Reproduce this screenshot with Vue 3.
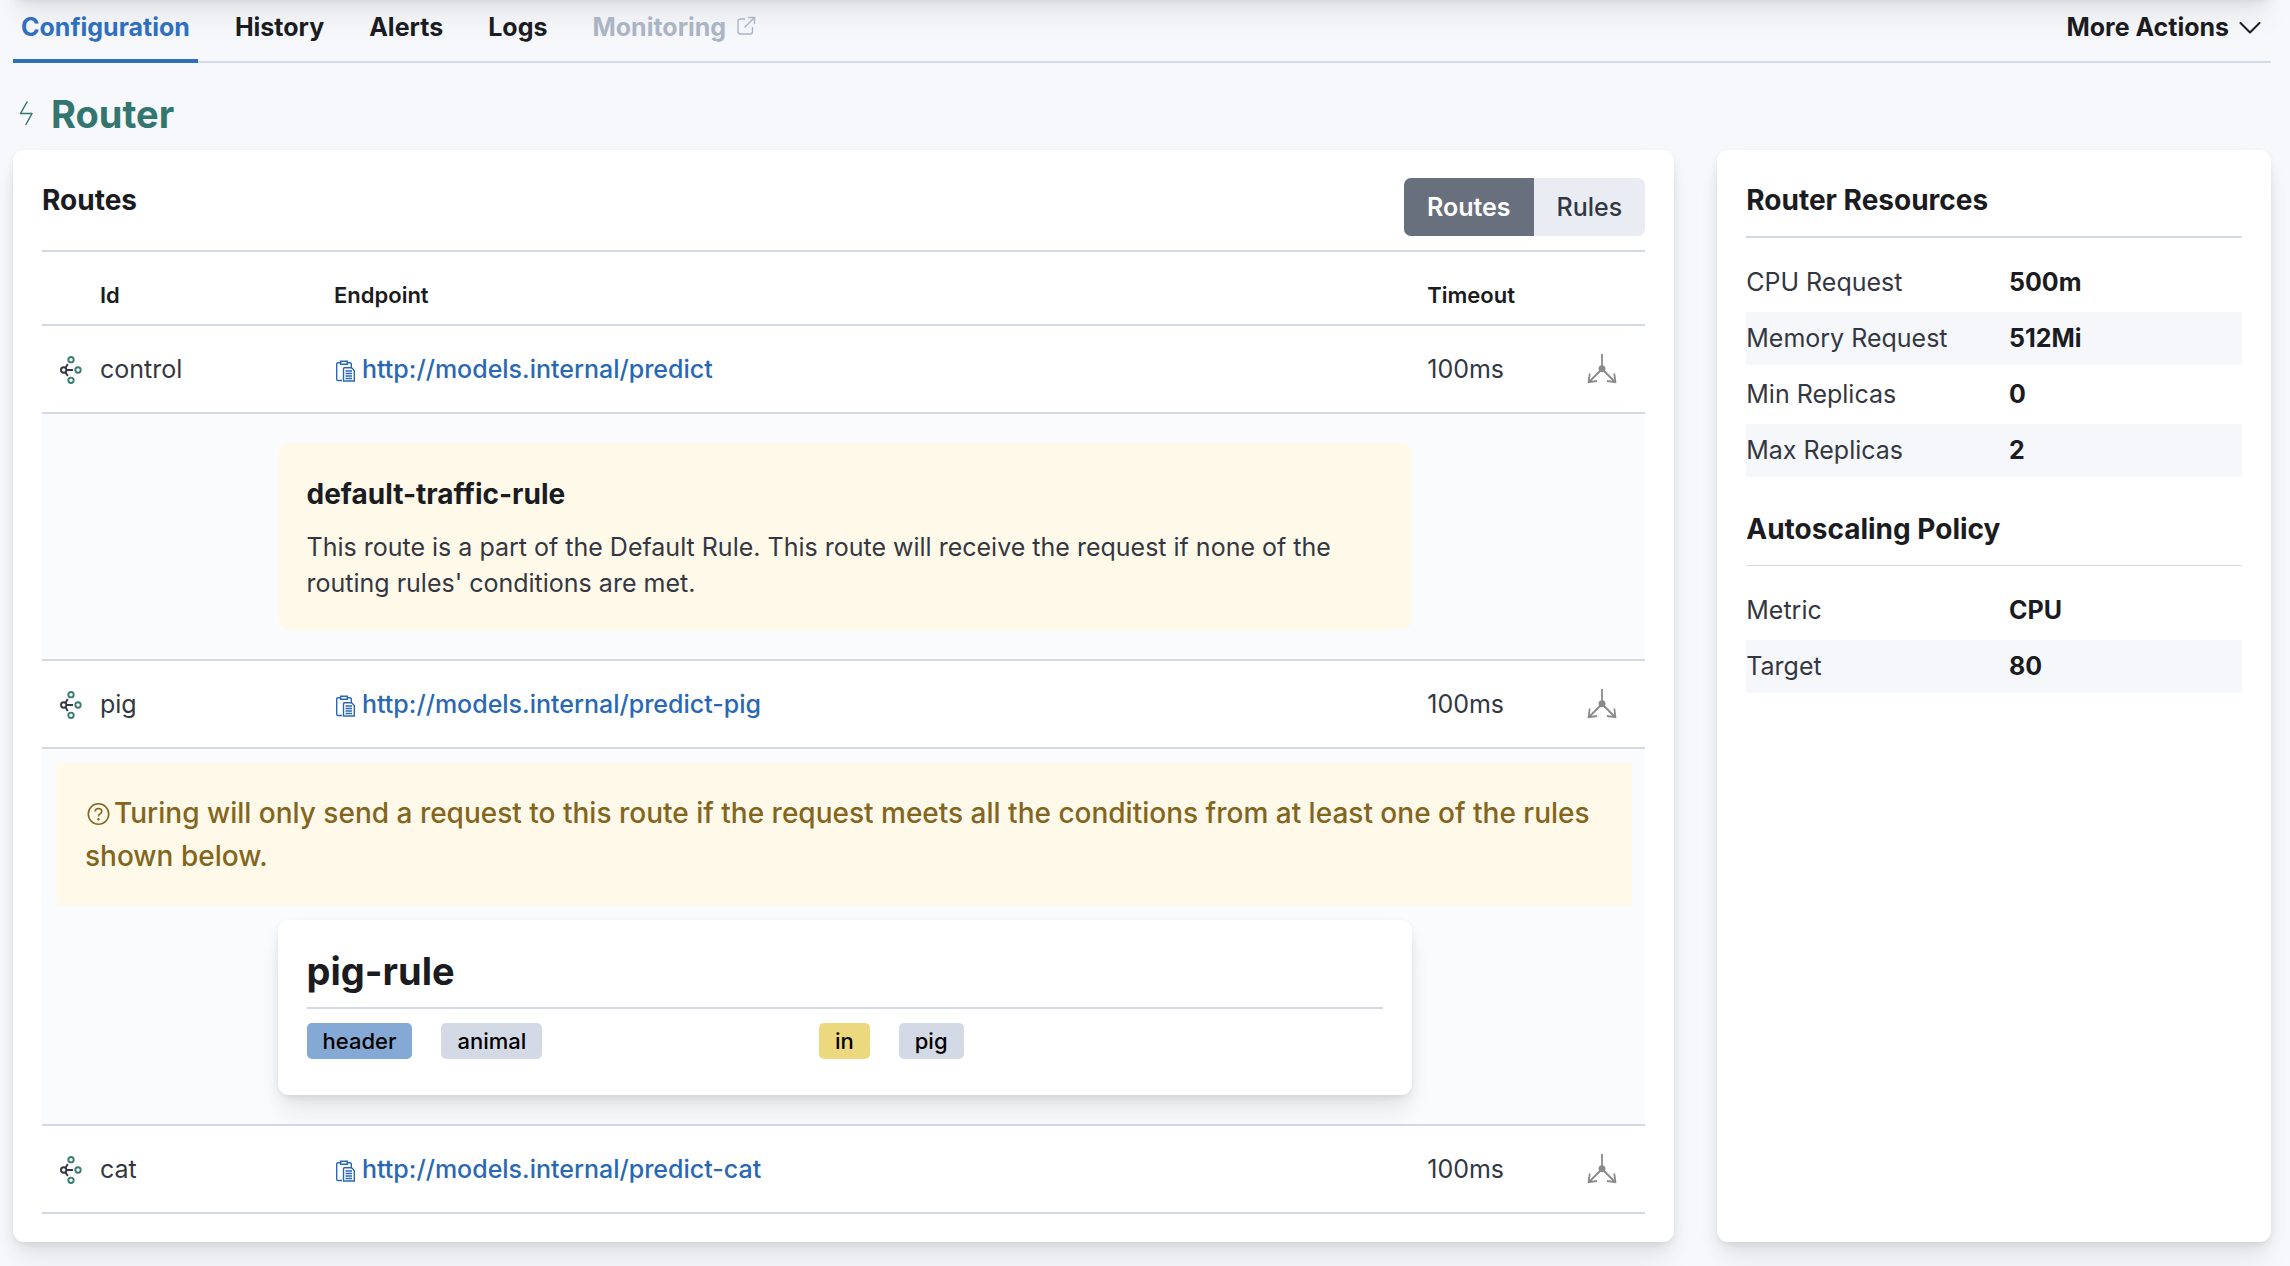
<script setup>
import { ref } from 'vue'

const tabs = ['Configuration', 'History', 'Alerts', 'Logs']
const activeTab = ref('Configuration')
const views = ['Routes', 'Rules']
const activeView = ref('Routes')

const routes = [
  { id: 'control', endpoint: 'http://models.internal/predict', timeout: '100ms', isDefault: true },
  {
    id: 'pig',
    endpoint: 'http://models.internal/predict-pig',
    timeout: '100ms',
    rule: { name: 'pig-rule', source: 'header', field: 'animal', operator: 'in', value: 'pig' },
  },
  { id: 'cat', endpoint: 'http://models.internal/predict-cat', timeout: '100ms' },
]

const sections = [
  {
    title: 'Router Resources',
    items: [
      ['CPU Request', '500m'],
      ['Memory Request', '512Mi'],
      ['Min Replicas', '0'],
      ['Max Replicas', '2'],
    ],
  },
  {
    title: 'Autoscaling Policy',
    items: [
      ['Metric', 'CPU'],
      ['Target', '80'],
    ],
  },
]
</script>

<template>
  <div class="page">
    <nav class="tabs">
      <button
        v-for="tab in tabs"
        :key="tab"
        type="button"
        class="tab"
        :class="{ active: tab === activeTab }"
        @click="activeTab = tab"
      >{{ tab }}</button>
      <button type="button" class="tab muted" disabled>
        Monitoring
        <svg width="20" height="20" viewBox="0 0 20 20" fill="none" stroke="currentColor" stroke-width="1.4" aria-hidden="true">
          <path d="M9 3H4.500Q2 3 2 5.500V15.500Q2 18 4.500 18H14Q16.500 18 16.500 15.500V11M12 1.500H18.500V8M18.300 1.700L8.500 11.500" />
        </svg>
      </button>
      <button type="button" class="tab more">
        More Actions
        <svg width="22" height="14" viewBox="0 0 22 14" fill="none" stroke="currentColor" stroke-width="2" stroke-linecap="round" stroke-linejoin="round" aria-hidden="true">
          <path d="M1.500 1L11 10.500L20.500 1" />
        </svg>
      </button>
    </nav>

    <h1 class="page-title">
      <svg width="16" height="26" viewBox="0 0 16 26" fill="none" stroke="currentColor" stroke-width="1.500" stroke-linejoin="round" stroke-linecap="round" aria-hidden="true">
        <path d="M9 1L2.500 12.500H14L8 23.500" />
      </svg>
      Router
    </h1>

    <main class="columns">
      <section class="panel routes">
        <header class="panel-head">
          <h2 class="title">Routes</h2>
          <div class="toggle" role="group" aria-label="View">
            <button
              v-for="view in views"
              :key="view"
              type="button"
              :aria-pressed="view === activeView"
              @click="activeView = view"
            >{{ view }}</button>
          </div>
        </header>

        <table class="table">
          <colgroup>
            <col class="c-icon" />
            <col class="c-id" />
            <col />
            <col class="c-timeout" />
            <col class="c-action" />
          </colgroup>
          <thead>
            <tr>
              <th></th>
              <th scope="col">Id</th>
              <th scope="col">Endpoint</th>
              <th scope="col">Timeout</th>
              <th></th>
            </tr>
          </thead>
          <tbody>
            <template v-for="route in routes" :key="route.id">
              <tr class="row">
                <td class="route-icon">
                  <svg width="24" height="28" viewBox="0 0 24 28" fill="none" stroke-width="1.900" aria-hidden="true">
                    <g stroke="#343741">
                      <circle cx="4.700" cy="14" r="2.700" />
                      <path d="M6.500 11.800L8.800 8M7.500 14H14M6.500 16.200L8.800 20" />
                    </g>
                    <g stroke="#387c72">
                      <circle cx="12" cy="3.700" r="2.700" />
                      <circle cx="19" cy="14" r="2.700" />
                      <circle cx="12" cy="24.300" r="2.700" />
                    </g>
                  </svg>
                </td>
                <td>{{ route.id }}</td>
                <td>
                  <a class="endpoint" :href="route.endpoint">
                    <svg width="22" height="22" viewBox="0 0 22 22" fill="none" stroke="currentColor" stroke-width="1.400" aria-hidden="true">
                      <path d="M8 20.500H4Q2.700 20.500 2.700 19.200V4Q2.700 2.700 4 2.700H6.500M13.500 2.700H16Q17.300 2.700 17.300 4V7.500" />
                      <path d="M6.700 1.200H13.300V4.200H6.700Z" />
                      <path d="M10.300 7.700H17.500L20.300 10.500V21H9.500V8.500Q9.500 7.700 10.300 7.700Z" />
                      <path d="M11.500 11H18M11.500 13.500H18M11.500 16H18M11.500 18.500H18" />
                    </svg>
                    <span>{{ route.endpoint }}</span>
                  </a>
                </td>
                <td>{{ route.timeout }}</td>
                <td class="action">
                  <button type="button" aria-label="Toggle route details">
                    <svg width="30" height="30" viewBox="0 0 30 30" fill="none" stroke="#8a8a8a" stroke-width="1.800" aria-hidden="true">
                      <path d="M15 0V15M15 15L2 28M15 15L28 28M2.700 19.500L1.600 28.200L10 27M27.300 19.500L28.400 28.200L20 27" />
                      <circle cx="15" cy="14.700" r="3.500" fill="#8a8a8a" stroke="none" />
                    </svg>
                  </button>
                </td>
              </tr>
              <tr v-if="route.isDefault" class="details">
                <td colspan="5" class="spacious">
                  <article class="card default-rule">
                    <h3 class="title">default-traffic-rule</h3>
                    <p>This route is a part of the Default Rule. This route will receive the request if none of the routing rules' conditions are met.</p>
                  </article>
                </td>
              </tr>
              <tr v-if="route.rule" class="details">
                <td colspan="5">
                  <p class="callout">
                    <svg width="29" height="24" viewBox="0 0 29 24" fill="none" stroke="currentColor" stroke-width="1.600" aria-hidden="true">
                      <circle cx="13.500" cy="12" r="10.200" />
                      <path d="M10.200 9.500Q10.200 6.500 13.500 6.500Q16.800 6.500 16.800 9.300Q16.800 11 15 11.900Q13.500 12.700 13.500 14.500" />
                      <circle cx="13.500" cy="17.300" r="1.200" fill="currentColor" stroke="none" />
                    </svg>Turing will only send a request to this route if the request meets all the conditions from at least one of the rules shown below.
                  </p>
                  <article class="card rule">
                    <h3>{{ route.rule.name }}</h3>
                    <div class="conditions">
                      <div class="badges">
                        <span class="badge source">{{ route.rule.source }}</span>
                        <span class="badge">{{ route.rule.field }}</span>
                      </div>
                      <div class="badges">
                        <span class="badge operator">{{ route.rule.operator }}</span>
                        <span class="badge">{{ route.rule.value }}</span>
                      </div>
                    </div>
                  </article>
                </td>
              </tr>
            </template>
          </tbody>
        </table>
      </section>

      <aside class="panel resources">
        <section v-for="section in sections" :key="section.title">
          <h2 class="title">{{ section.title }}</h2>
          <dl>
            <div v-for="[label, value] in section.items" :key="label">
              <dt>{{ label }}</dt>
              <dd>{{ value }}</dd>
            </div>
          </dl>
        </section>
      </aside>
    </main>
  </div>
</template>

<style>
body {
  margin: 0;
  background: #f7f8fc;
}
</style>

<style scoped>
.page {
  --border: #d3dae6;
  --ink: #1a1c21;
  --warm: #fff9ea;
  --shadow: 0 2px 7px -2px rgba(0, 0, 0, 0.08), 0 5px 14px -2px rgba(0, 0, 0, 0.06),
    0 10px 22px -2px rgba(0, 0, 0, 0.05), 0 27px 27px -2px rgba(0, 0, 0, 0.04);
  position: relative;
  min-height: 100vh;
  box-sizing: border-box;
  padding: 0 19px 23px 13px;
  overflow: hidden;
  background: #f7f8fc;
  color: #343741;
  font: 400 25px/36px Inter, "Liberation Sans", sans-serif;
}

.page::before {
  content: "";
  position: absolute;
  top: -42px;
  left: 13px;
  right: 19px;
  height: 40px;
  box-shadow: var(--shadow);
}

h1, h2, h3, p, dl, dd {
  margin: 0;
}

button {
  border: 0;
  padding: 0;
  background: none;
  color: inherit;
  font: inherit;
  cursor: pointer;
}

.tabs {
  position: relative;
  display: flex;
  gap: 29px;
  border-bottom: 2px solid var(--border);
}

.tab {
  margin-bottom: -2px;
  padding: 9px 8px 14px;
  border-bottom: 4px solid transparent;
  color: var(--ink);
  font-weight: 700;
}

.tab.active {
  border-color: #2f6fbf;
  color: #2f6fbf;
}

.tab.muted {
  color: #abb4c4;
}

.tab svg {
  margin-left: 4px;
}

.tab.more {
  margin-left: auto;
  padding-right: 10px;
}

.page-title {
  display: flex;
  align-items: center;
  gap: 17px;
  margin: 27px 0 12px;
  padding-left: 5px;
  color: #33766f;
  font-size: 38px;
  font-weight: 700;
  line-height: 48px;
}

.columns {
  display: grid;
  grid-template-columns: 3fr 1fr;
  gap: 43px;
}

.panel {
  min-width: 0;
  padding: 28px 29px;
  border-radius: 11px;
  background: #fff;
  box-shadow: var(--shadow);
}

.title {
  color: var(--ink);
  font-size: 28px;
  font-weight: 700;
  line-height: 44px;
}

.panel-head {
  display: flex;
  align-items: flex-start;
  justify-content: space-between;
  padding-bottom: 14px;
  border-bottom: 2px solid var(--border);
}

.toggle {
  display: flex;
  overflow: hidden;
  border-radius: 7px;
  background: #e9edf3;
}

.toggle button {
  padding: 0 23px;
  font-weight: 500;
  line-height: 58px;
}

.toggle button[aria-pressed="true"] {
  background: #69707d;
  color: #fff;
  font-weight: 600;
}

.table {
  width: 100%;
  table-layout: fixed;
  border-collapse: separate;
  border-spacing: 0;
}

.c-icon { width: 46px; }
.c-id { width: 234px; }
.c-timeout { width: 144px; }
.c-action { width: 86px; }

.table th {
  height: 58px;
  padding: 14px 12px 0;
  border-bottom: 2px solid var(--border);
  color: var(--ink);
  font-size: 22px;
  font-weight: 600;
  text-align: left;
}

.table td {
  padding: 0 12px;
  border-bottom: 2px solid var(--border);
}

.row td {
  box-sizing: border-box;
  height: 88px;
}

.table .route-icon {
  padding: 2px 0 0 17px;
}

.table .action {
  padding: 0;
}

.table svg {
  display: block;
}

.action button {
  display: block;
  margin: 0 auto;
}

.endpoint {
  display: flex;
  align-items: center;
  gap: 6px;
  color: #2968b4;
  font-weight: 500;
  text-decoration: none;
}

.endpoint svg {
  margin-top: 4px;
}

.details td {
  padding: 14px 13px 29px 15px;
  background: #fafbfd;
}

.details .spacious {
  padding-top: 29px;
}

.card {
  width: 72%;
  box-sizing: border-box;
  margin: 0 auto;
  padding: 29px;
  border-radius: 11px;
}

.default-rule {
  background: var(--warm);
}

.default-rule p {
  margin-top: 13px;
}

.callout {
  margin-bottom: 14px;
  padding: 29px 28px 28px;
  background: var(--warm);
  color: #83651d;
  font-size: 28px;
  font-weight: 500;
  line-height: 43px;
}

.callout svg {
  display: inline;
  vertical-align: -3px;
}

.rule {
  padding: 27px 29px 36px;
  background: #fff;
  box-shadow: var(--shadow);
}

.rule h3 {
  padding-bottom: 12px;
  border-bottom: 2px solid var(--border);
  color: var(--ink);
  font-size: 38px;
  font-weight: 700;
  line-height: 48px;
}

.conditions {
  display: grid;
  grid-template-columns: 10fr 11fr;
  margin-top: 14px;
}

.badges {
  display: flex;
  gap: 29px;
}

.badge {
  padding: 0 16px;
  border-radius: 5px;
  background: #d3dae6;
  color: #000;
  font-size: 22px;
  font-weight: 500;
}

.badge.source { background: #84a9d5; }
.badge.operator { background: #ecd97f; }

.resources section + section {
  margin-top: 30px;
}

.resources .title {
  padding-bottom: 14px;
  border-bottom: 2px solid var(--border);
}

.resources section + section .title {
  border-bottom-width: 1px;
}

.resources dl {
  display: grid;
  gap: 3px;
  margin-top: 18px;
}

.resources dl div {
  display: grid;
  grid-template-columns: 53% 47%;
  line-height: 53px;
}

.resources dl div:nth-child(even) {
  background: #f5f7fb;
}

.resources dd {
  color: var(--ink);
  font-weight: 700;
}
</style>
